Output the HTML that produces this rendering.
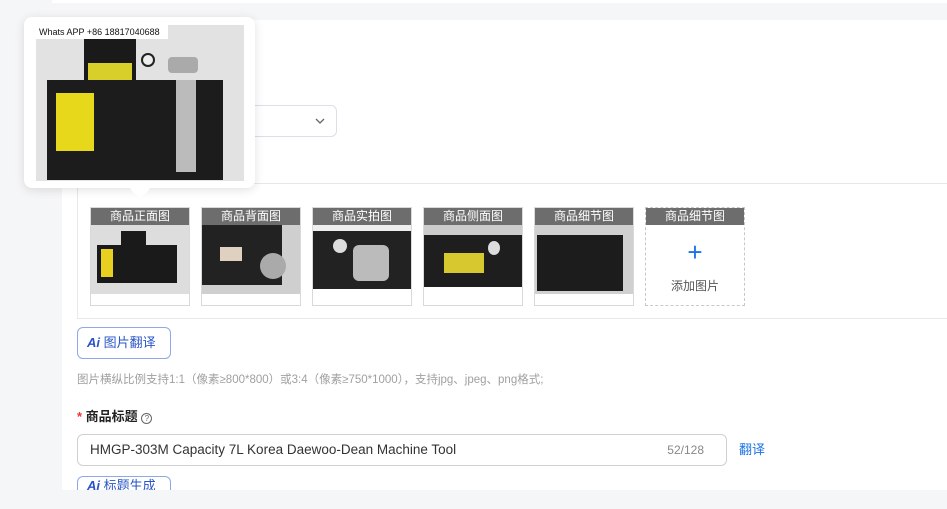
<!DOCTYPE html>
<html><head><meta charset="utf-8"><style>
*{margin:0;padding:0;box-sizing:border-box}
body{width:947px;height:509px;overflow:hidden;background:#f5f6f8;font-family:"Liberation Sans","Noto Sans CJK SC",sans-serif;position:relative}
.a{position:absolute}
.thumb{position:absolute;top:207px;width:100px;height:99px;border:1px solid #d9d9d9;background:#fff}
.thumb .h{height:17px;background:#6d6d6d;color:#fff;font-size:12px;text-align:center;line-height:17px}
.ph{position:absolute;left:0;top:17px;width:98px;height:69px;background:#d8d8d8;overflow:hidden}
</style></head><body>
<div class="a" style="left:52px;top:0;width:895px;height:3px;background:#fff"></div>
<div class="a" style="left:62px;top:20px;width:885px;height:470px;background:#fff"></div>
<div class="a" style="left:77px;top:105px;width:260px;height:32px;border:1px solid #dcdfe6;border-radius:6px;background:#fff"></div>
<svg class="a" style="left:314px;top:115px" width="12" height="12" viewBox="0 0 12 12"><path d="M2 4l4 4 4-4" fill="none" stroke="#666" stroke-width="1.3"/></svg>
<div class="a" style="left:77px;top:183px;width:880px;height:136px;border:1px solid #e8e8e8;border-right:none"></div>

<div class="thumb" style="left:90px"><div class="h">商品正面图</div><div class="ph" style="background:#ddd"><div class="a" style="left:6px;top:20px;width:80px;height:38px;background:#1a1a1a"></div><div class="a" style="left:10px;top:24px;width:12px;height:28px;background:#e8d020"></div><div class="a" style="left:30px;top:6px;width:25px;height:16px;background:#1a1a1a"></div></div></div>
<div class="thumb" style="left:201px"><div class="h">商品背面图</div><div class="ph" style="background:#cfcfcf"><div class="a" style="left:0;top:0;width:80px;height:60px;background:#222"></div><div class="a" style="left:18px;top:22px;width:22px;height:14px;background:#e0d0c0"></div><div class="a" style="left:58px;top:28px;width:26px;height:26px;border-radius:50%;background:#aaa"></div></div></div>
<div class="thumb" style="left:312px"><div class="h">商品实拍图</div><div class="ph" style="height:64px;background:#222"><div class="a" style="left:0;top:0;width:98px;height:6px;background:#eee"></div><div class="a" style="left:40px;top:20px;width:36px;height:36px;background:#bbb;border-radius:6px"></div><div class="a" style="left:20px;top:14px;width:14px;height:14px;background:#ddd;border-radius:50%"></div></div></div>
<div class="thumb" style="left:423px"><div class="h">商品侧面图</div><div class="ph" style="height:62px;background:#ccc"><div class="a" style="left:0;top:10px;width:98px;height:52px;background:#1e1e1e"></div><div class="a" style="left:20px;top:28px;width:40px;height:20px;background:#d8c830"></div><div class="a" style="left:64px;top:16px;width:12px;height:14px;background:#ddd;border-radius:50%"></div></div></div>
<div class="thumb" style="left:534px"><div class="h">商品细节图</div><div class="ph" style="background:#d0d0d0"><div class="a" style="left:2px;top:10px;width:86px;height:56px;background:#1c1c1c"></div></div></div>
<div class="thumb" style="left:645px;border:1px dashed #c8c8c8"><div class="h">商品细节图</div><div style="text-align:center;color:#1a73e8;font-size:26px;line-height:26px;margin-top:14px">+</div><div style="text-align:center;color:#555;font-size:12px;margin-top:12px">添加图片</div></div>

<div class="a" style="left:77px;top:327px;width:94px;height:32px;border:1px solid #8fa8e8;border-radius:6px;color:#2a55c8;font-size:13px;line-height:30px;padding-left:9px"><b style="font-style:italic">Ai</b> 图片翻译</div>
<div class="a" style="left:77px;top:371px;font-size:11.5px;color:#a0a0a0">图片横纵比例支持1:1（像素≥800*800）或3:4（像素≥750*1000），支持jpg、jpeg、png格式;</div>
<div class="a" style="left:77px;top:406px;font-size:13px;color:#222;font-weight:bold"><span style="color:#e33">*</span> 商品标题 <span style="font-weight:normal;color:#666;border:1px solid #666;border-radius:50%;display:inline-block;width:11px;height:11px;line-height:10px;text-align:center;font-size:8px">?</span></div>
<div class="a" style="left:77px;top:434px;width:650px;height:32px;border:1px solid #d0d0d0;border-radius:6px;font-size:13.5px;color:#333;line-height:30px;padding-left:12px">HMGP-303M Capacity 7L Korea Daewoo-Dean Machine Tool<span style="position:absolute;right:22px;color:#888;font-size:12px">52/128</span></div>
<div class="a" style="left:739px;top:439px;font-size:13px;color:#1a73e8">翻译</div>
<div class="a" style="left:77px;top:476px;width:94px;height:14px;border:1px solid #8fa8e8;border-bottom:none;border-radius:6px 6px 0 0;overflow:hidden;color:#2a55c8;font-size:13px;line-height:30px;padding-left:9px"><div style="margin-top:-6px"><b style="font-style:italic">Ai</b> 标题生成</div></div>
<div class="a" style="left:62px;top:490px;width:885px;height:19px;background:#f5f6f8"></div>

<div class="a" style="left:24px;top:17px;width:231px;height:171px;background:#fff;border-radius:8px;box-shadow:0 2px 10px rgba(0,0,0,.12)"></div>
<div class="a" style="left:133px;top:182px;width:14px;height:14px;background:#fff;transform:rotate(45deg)"></div>
<div class="a" style="left:36px;top:25px;width:208px;height:156px;background:#e2e2e2;overflow:hidden">
 <div class="a" style="left:0;top:0;width:132px;height:14px;background:#fff;font-size:9px;line-height:14px;padding-left:3px;color:#111">Whats APP +86 18817040688</div>
 <div class="a" style="left:48px;top:14px;width:52px;height:42px;background:#1a1a1a"></div>
 <div class="a" style="left:52px;top:38px;width:44px;height:18px;background:#d8cf2a"></div>
 <div class="a" style="left:105px;top:28px;width:14px;height:14px;border-radius:50%;background:#eee;border:2px solid #222"></div>
 <div class="a" style="left:132px;top:32px;width:30px;height:16px;border-radius:4px;background:#aaa"></div>
 <div class="a" style="left:11px;top:55px;width:176px;height:100px;background:#1c1c1c"></div>
 <div class="a" style="left:20px;top:68px;width:38px;height:58px;background:#e8d81c"></div>
 <div class="a" style="left:140px;top:55px;width:20px;height:92px;background:#bbb"></div>
</div>
</body></html>
